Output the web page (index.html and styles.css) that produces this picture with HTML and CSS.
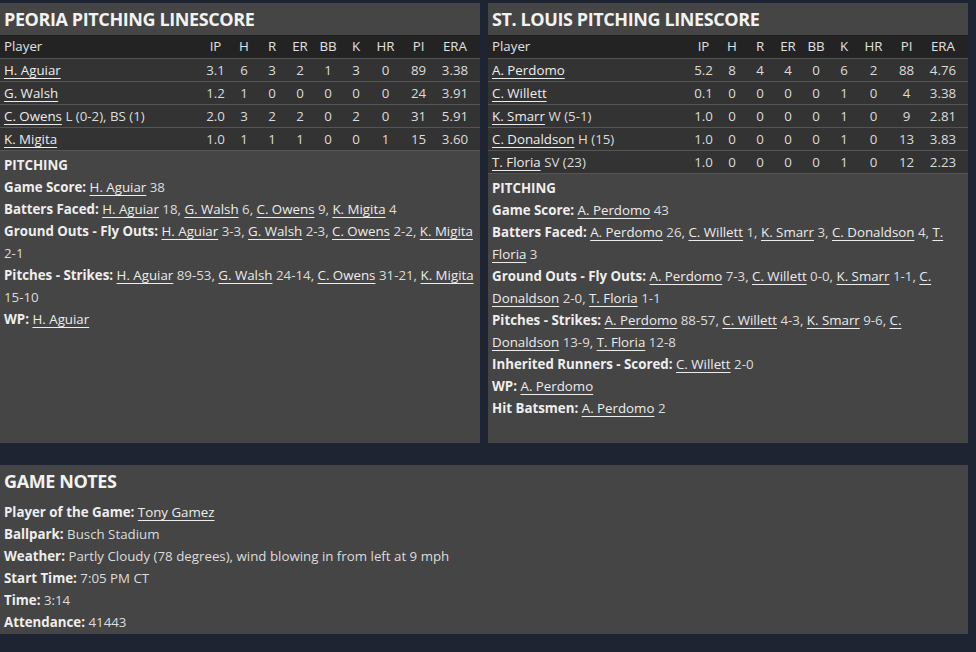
FILE: index.html
```html
<!DOCTYPE html>
<html>
<head>
<meta charset="utf-8">
<link rel="stylesheet" href="styles.css">
</head>
<body>
<div class="page">
  <div class="panels">
    <section class="panel">
      <h2 class="panel-title">PEORIA PITCHING LINESCORE</h2>
      <div class="row head">
        <span class="player">Player</span><span>IP</span><span>H</span><span>R</span><span>ER</span><span>BB</span><span>K</span><span>HR</span><span>PI</span><span>ERA</span>
      </div>
      <div class="row">
        <span class="player"><a>H. Aguiar</a></span><span>3.1</span><span>6</span><span>3</span><span>2</span><span>1</span><span>3</span><span>0</span><span>89</span><span>3.38</span>
      </div>
      <div class="row">
        <span class="player"><a>G. Walsh</a></span><span>1.2</span><span>1</span><span>0</span><span>0</span><span>0</span><span>0</span><span>0</span><span>24</span><span>3.91</span>
      </div>
      <div class="row">
        <span class="player"><a>C. Owens</a> L (0-2), BS (1)</span><span>2.0</span><span>3</span><span>2</span><span>2</span><span>0</span><span>2</span><span>0</span><span>31</span><span>5.91</span>
      </div>
      <div class="row last">
        <span class="player"><a>K. Migita</a></span><span>1.0</span><span>1</span><span>1</span><span>1</span><span>0</span><span>0</span><span>1</span><span>15</span><span>3.60</span>
      </div>
      <div class="notes">
        <p class="lbl">PITCHING</p>
        <p><b>Game Score:</b> <a>H. Aguiar</a> 38</p>
        <p><b>Batters Faced:</b> <a>H. Aguiar</a> 18, <a>G. Walsh</a> 6, <a>C. Owens</a> 9, <a>K. Migita</a> 4</p>
        <p><b>Ground Outs - Fly Outs:</b> <a>H. Aguiar</a> 3-3, <a>G. Walsh</a> 2-3, <a>C. Owens</a> 2-2, <a>K. Migita</a> 2-1</p>
        <p><b>Pitches - Strikes:</b> <a>H. Aguiar</a> 89-53, <a>G. Walsh</a> 24-14, <a>C. Owens</a> 31-21, <a>K. Migita</a> 15-10</p>
        <p><b>WP:</b> <a>H. Aguiar</a></p>
      </div>
    </section>
    <section class="panel">
      <h2 class="panel-title">ST. LOUIS PITCHING LINESCORE</h2>
      <div class="row head">
        <span class="player">Player</span><span>IP</span><span>H</span><span>R</span><span>ER</span><span>BB</span><span>K</span><span>HR</span><span>PI</span><span>ERA</span>
      </div>
      <div class="row">
        <span class="player"><a>A. Perdomo</a></span><span>5.2</span><span>8</span><span>4</span><span>4</span><span>0</span><span>6</span><span>2</span><span>88</span><span>4.76</span>
      </div>
      <div class="row">
        <span class="player"><a>C. Willett</a></span><span>0.1</span><span>0</span><span>0</span><span>0</span><span>0</span><span>1</span><span>0</span><span>4</span><span>3.38</span>
      </div>
      <div class="row">
        <span class="player"><a>K. Smarr</a> W (5-1)</span><span>1.0</span><span>0</span><span>0</span><span>0</span><span>0</span><span>1</span><span>0</span><span>9</span><span>2.81</span>
      </div>
      <div class="row">
        <span class="player"><a>C. Donaldson</a> H (15)</span><span>1.0</span><span>0</span><span>0</span><span>0</span><span>0</span><span>1</span><span>0</span><span>13</span><span>3.83</span>
      </div>
      <div class="row last">
        <span class="player"><a>T. Floria</a> SV (23)</span><span>1.0</span><span>0</span><span>0</span><span>0</span><span>0</span><span>1</span><span>0</span><span>12</span><span>2.23</span>
      </div>
      <div class="notes">
        <p class="lbl">PITCHING</p>
        <p><b>Game Score:</b> <a>A. Perdomo</a> 43</p>
        <p><b>Batters Faced:</b> <a>A. Perdomo</a> 26, <a>C. Willett</a> 1, <a>K. Smarr</a> 3, <a>C. Donaldson</a> 4, <a>T. Floria</a> 3</p>
        <p><b>Ground Outs - Fly Outs:</b> <a>A. Perdomo</a> 7-3, <a>C. Willett</a> 0-0, <a>K. Smarr</a> 1-1, <a>C. Donaldson</a> 2-0, <a>T. Floria</a> 1-1</p>
        <p><b>Pitches - Strikes:</b> <a>A. Perdomo</a> 88-57, <a>C. Willett</a> 4-3, <a>K. Smarr</a> 9-6, <a>C. Donaldson</a> 13-9, <a>T. Floria</a> 12-8</p>
        <p><b>Inherited Runners - Scored:</b> <a>C. Willett</a> 2-0</p>
        <p><b>WP:</b> <a>A. Perdomo</a></p>
        <p><b>Hit Batsmen:</b> <a>A. Perdomo</a> 2</p>
      </div>
    </section>
  </div>
  <section class="panel game-notes">
    <h2 class="panel-title">GAME NOTES</h2>
    <div class="notes">
      <p><b>Player of the Game:</b> <a>Tony Gamez</a></p>
      <p><b>Ballpark:</b> Busch Stadium</p>
      <p><b>Weather:</b> Partly Cloudy (78 degrees), wind blowing in from left at 9 mph</p>
      <p><b>Start Time:</b> 7:05 PM CT</p>
      <p><b>Time:</b> 3:14</p>
      <p><b>Attendance:</b> 41443</p>
    </div>
  </section>
</div>
</body>
</html>
```

FILE: styles.css
```css
* { box-sizing: border-box; }
html, body {
  margin: 0;
  padding: 0;
}
body {
  background: #1e2431;
  color: #e2e2e2;
  font-family: "Open Sans", "Noto Sans", sans-serif;
  font-size: 13.3px;
  width: 976px;
  height: 652px;
  overflow: hidden;
}
.page {
  padding-top: 3px;
  width: 968px;
}
.panels {
  display: grid;
  grid-template-columns: 480px 480px;
  column-gap: 8px;
  height: 440px;
}
.panel {
  background: #454545;
}
.panel-title {
  margin: 0;
  height: 32px;
  line-height: 33px;
  padding-left: 4px;
  font-size: 18px;
  letter-spacing: -0.4px;
  font-weight: 700;
  color: #f2f2f2;
}
.row {
  display: grid;
  grid-template-columns: 1fr 29px 28px 28px 28px 28px 28px 31px 35px 38px;
  padding: 0 6px 0 4px;
  height: 23px;
  line-height: 22px;
  background: #333333;
  border-top: 1px solid #555555;
  color: #dcdcdc;
}
.row span { text-align: center; white-space: nowrap; }
.row span.player { text-align: left; }
.row.head {
  background: #232323;
  border-top: none;
  color: #e0e0e0;
}
.row.last { border-bottom: 1px solid #555555; height: 24px; }
a {
  color: #ececec;
  text-decoration: underline;
  text-underline-offset: 3px;
  text-decoration-thickness: 1px;
}
.notes {
  padding: 3px 4px 0 4px;
  line-height: 22px;
}
.notes p { margin: 0; color: #dcdcdc; }
.notes b, .notes .lbl { font-weight: 700; color: #eeeeee; }
.game-notes {
  margin-top: 22px;
  height: 169px;
}
.game-notes .notes { padding-top: 4px; }
```
